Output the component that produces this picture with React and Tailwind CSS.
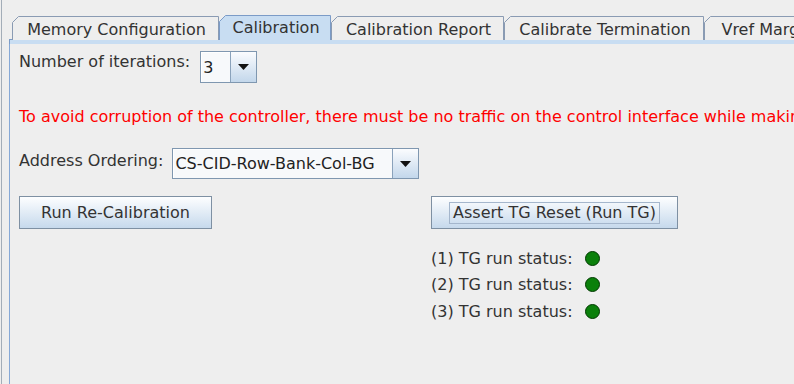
const tabs = [
  { label: "Memory Configuration", w: 207 },
  { label: "Calibration", w: 112, active: true },
  { label: "Calibration Report", w: 173 },
  { label: "Calibrate Termination", w: 200 },
  { label: "Vref Margining", w: 150 },
];

function Tab({ label, w, active }) {
  const h = active ? 25 : 24;
  return (
    <div className={`relative shrink-0 ${active ? "z-10 h-[25px]" : "h-[24px]"}`} style={{ width: w }}>
      <svg className="absolute inset-0" width={w} height={h}>
        <path
          d={`M0.5 ${h} V6.5 L6.5 0.5 H${w - 0.5} V${h}`}
          fill={active ? "#c8ddf2" : "#eeeeee"}
          stroke={active ? "#7b9bc7" : "#8a9bb3"}
        />
      </svg>
      <span
        className={`relative flex h-[24px] items-center justify-center whitespace-nowrap pl-[2px] ${
          active ? "pt-[2px]" : "pt-[3px]"
        }`}
      >
        {label}
      </span>
    </div>
  );
}

function Combo({ value, fieldW, h }) {
  return (
    <div className="flex border border-[#7f97b0]" style={{ height: h }}>
      <div
        className="flex items-center border-r border-[#8aa2bb] bg-[#f7f9fb] pl-[2px] pt-[1px] text-[#222] shadow-[inset_1px_1px_0_#ffffff]"
        style={{ width: fieldW }}
      >
        {value}
      </div>
      <div className="flex w-[25px] items-center justify-center bg-gradient-to-b from-[#fbfcfe] to-[#c3d7eb]">
        <svg width="11" height="6" viewBox="0 0 11 6">
          <path d="M0 0 H11 L5.5 6 Z" fill="#111" />
        </svg>
      </div>
    </div>
  );
}

function Button({ children, w, focus }) {
  return (
    <div
      className="flex h-[33px] items-center justify-center border border-[#7e90a3] bg-gradient-to-b from-[#fdfeff] to-[#c6d9ec] pt-[1px]"
      style={{ width: w }}
    >
      <span className={focus ? "border border-[#a4b6cc] px-[3px] leading-[20px]" : ""}>{children}</span>
    </div>
  );
}

function Status({ n }) {
  return (
    <div className="flex h-[20px] items-center">
      <span className="pt-[1px]">({n}) TG run status:</span>
      <span className="ml-[12px] h-[15px] w-[15px] rounded-full border border-[#003a00] bg-[#0b800b]" />
    </div>
  );
}

export default function App() {
  return (
    <div className="flex h-[384px] w-[794px] overflow-hidden bg-[#eeeeee] pl-[1px] font-['DejaVu_Sans',sans-serif] text-[16px] leading-[20px] text-[#333333]">
      <div className="flex flex-1 border-l border-[#a3adb8] pl-[7px]">
        <div className="flex flex-1 flex-col pt-[15px]">
          {/* tabs */}
          <div className="-mb-px flex h-[25px] items-end pl-[3px]">
            {tabs.map((t) => (
              <Tab key={t.label} {...t} />
            ))}
          </div>
          <div className="h-[5px] border-t border-l border-[#7b9bc7] bg-[#c8ddf2]" />

          {/* body */}
          <div className="flex flex-1 flex-col border-l border-[#86a8d6] pl-[9px] pt-[6px]">
            <div className="flex items-start">
              <span className="mt-[2px] whitespace-nowrap">Number of iterations:</span>
              <div className="ml-[10px] mt-[1px]">
                <Combo value="3" fieldW={30} h={32} />
              </div>
            </div>

            <div className="mt-[24px] whitespace-nowrap text-[#ff0000]">
              To avoid corruption of the controller, there must be no traffic on the control interface while making changes.
            </div>

            <div className="mt-[21px] flex items-start">
              <span className="mt-[3px] whitespace-nowrap">Address Ordering:</span>
              <div className="ml-[9px]">
                <Combo value="CS-CID-Row-Bank-Col-BG" fieldW={220} h={31} />
              </div>
            </div>

            <div className="mt-[17px] flex">
              <div className="w-[412px] shrink-0">
                <Button w={193}>Run Re-Calibration</Button>
              </div>
              <div className="flex flex-col">
                <Button w={247} focus>
                  Assert TG Reset (Run TG)
                </Button>
                <div className="mt-[19px] flex flex-col gap-[6.5px]">
                  <Status n={1} />
                  <Status n={2} />
                  <Status n={3} />
                </div>
              </div>
            </div>
          </div>
        </div>
      </div>
    </div>
  );
}
